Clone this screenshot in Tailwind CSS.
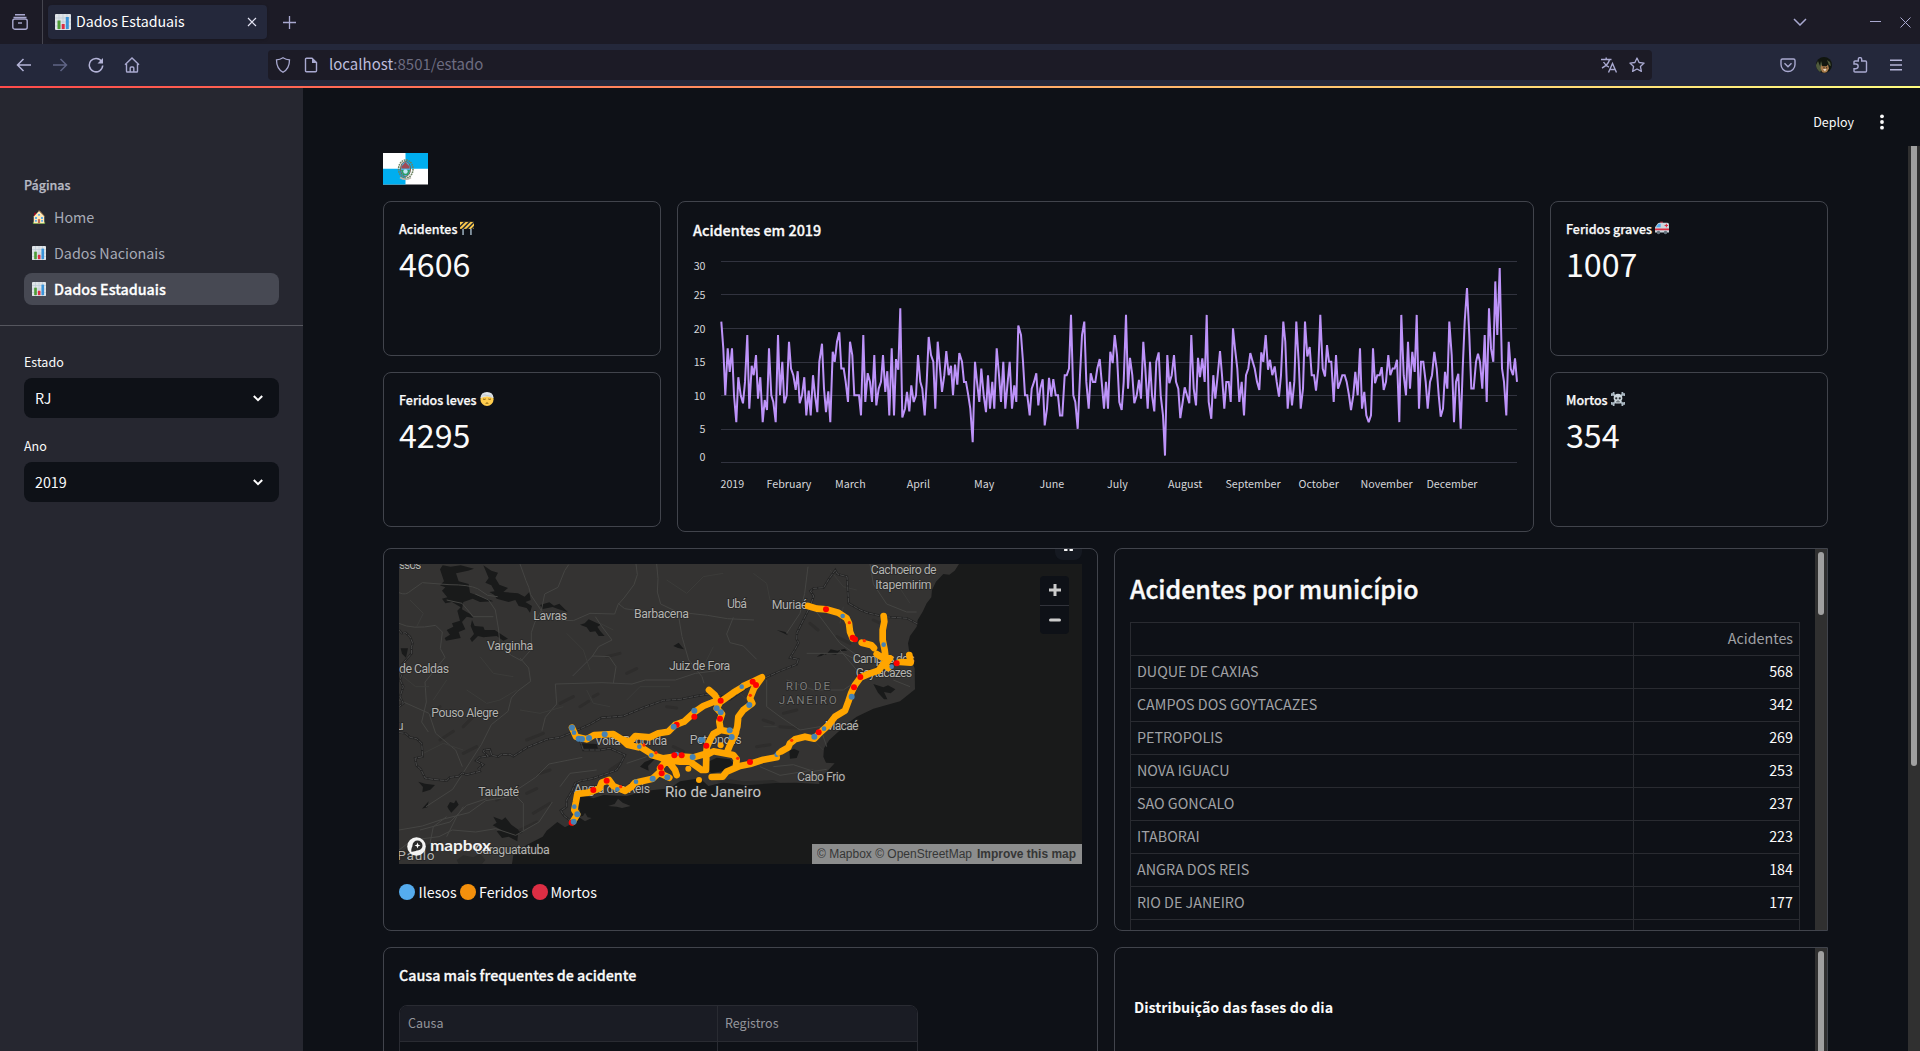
<!DOCTYPE html>
<html lang="pt-BR">
<head>
<meta charset="utf-8">
<title>Dados Estaduais</title>
<script src="https://cdn.jsdelivr.net/npm/@tailwindcss/browser@4"></script>
</head>
<body class="w-[1920px] h-[1051px] overflow-hidden flex flex-col bg-[#0e1117] text-[#fafafa] font-['Noto_Sans_CJK_JP','Noto_Sans',sans-serif] text-[14.3px] leading-6">
<svg class="hidden">
  <symbol id="bars" viewBox="0 0 16 16"><rect width="16" height="16" rx="1" fill="#dfe4e8"/><path d="M0 4h16M0 8h16M0 12h16M4 0v16M8 0v16M12 0v16" stroke="#bccad6" stroke-width=".7"/><path d="M2.5 6.5h3V15h-3z" fill="#4d9b35"/><path d="M6.7 10h3v5h-3z" fill="#dd2e44"/><path d="M10.8 3h3v12h-3z" fill="#3b94d9"/></symbol>
  <symbol id="house" viewBox="0 0 16 16"><path d="M1 13.5h14V16H1z" fill="#5c913b"/><path d="M2.5 3h2v4h-2z" fill="#a0041e"/><path d="M8 1 14 7.500v7.500H2V7.500z" fill="#ffe8b6"/><path d="M8 .5 14 7" stroke="#d9a86c" fill="none"/><path d="M3.500 8h2.200v2.200H3.500zM10.300 8h2.200v2.200h-2.200zM7 4.500h2v2H7zM3.500 11.500h2v2h-2zM10.500 11.500h2v2h-2z" fill="#55acee"/><path d="M6.800 10.500h2.400V15H6.800z" fill="#c1694f"/></symbol>
  <symbol id="barrier" viewBox="0 0 16 16"><path d="M2.500 8h2v8h-2zM11.500 8h2v8h-2z" fill="#8899a6"/><rect y="1" width="16" height="8" fill="#ffcc4d"/><path d="m0 5 4-4h2.500L0 7.500zM1.500 9l8-8H12L4 9zM7 9l8-8h1v1.500L9.500 9zM12.500 9 16 5.500V8l-1 1z" fill="#292f33"/></symbol>
  <symbol id="ambulance" viewBox="0 0 16 16"><path d="M6 2V.800h3V2z" fill="#dd2e44"/><path d="M0 7 3 3q1-1 2-1h9q2 0 2 2v9H0z" fill="#ccd6dd"/><path d="M1 7 4 3h2.500v4z" fill="#55acee"/><path d="M0 8.500h16v2H0zM11 4.500h4v1.200h-4zM12.400 3h1.200v4h-1.200z" fill="#dd2e44"/><circle cx="4" cy="13" r="2" fill="#66757f"/><circle cx="12" cy="13" r="2" fill="#66757f"/></symbol>
  <symbol id="bandage" viewBox="0 0 16 16"><circle cx="8" cy="8.500" r="7.500" fill="#ffcc4d"/><path d="M.500 7Q1 0 8 0t7.500 7Q8 3.500.500 7z" fill="#dfe4e8"/><path d="m1 4.500 13-1M3 2l11 4" stroke="#b4c0ca" stroke-width=".6"/><path d="M3.500 8q1.500.8 3 0M9.500 8q1.500.8 3 0M6.500 13q1.500-1 3 0" stroke="#664500" fill="none"/></symbol>
  <symbol id="skull" viewBox="0 0 16 16"><path d="m2 2 12 12M14 2 2 14" stroke="#aab8c2" stroke-width="2.200"/><path d="M0 1.500h2V0h2v3H2v1.500H0zM16 1.500h-2V0h-2v3h2v1.500h2zM0 14.500h2V16h2v-3H2v-1.500H0zM16 14.500h-2V16h-2v-3h2v-1.500h2z" fill="#aab8c2"/><path d="M8 2c3 0 5 2 5 5 0 2-1 2.500-1.500 3.500L11 13H5l-.5-2.500C4 9.500 3 9 3 7c0-3 2-5 5-5z" fill="#ccd6dd"/><circle cx="6" cy="7.200" r="1.300" fill="#292f33"/><circle cx="10" cy="7.200" r="1.300" fill="#292f33"/><path d="M6 11.200h4M8 9v1" stroke="#292f33" stroke-width=".9"/></symbol>
</svg>

<!-- tab strip -->
<header class="h-11 shrink-0 bg-[#1c1b26] flex items-center text-[#a9b1d6]">
  <div class="w-[43px] h-full border-r border-[#45454f] flex items-center pl-3">
    <svg class="size-4" viewBox="0 0 16 16" fill="none" stroke="#a9a9d0" stroke-width="1.400"><path d="M3 .700h10M1.500 3.400h13"/><rect x=".8" y="5" width="14.400" height="10.200" rx="2"/><path d="M6 9h4"/></svg>
  </div>
  <div class="ml-[5px] w-[219px] h-[34px] rounded bg-[#24283b] shadow flex items-center pl-[7px] pr-2.5 text-white">
    <svg class="size-4"><use href="#bars"/></svg>
    <span class="ml-[5px] flex-1 text-[14.2px] pb-0.5">Dados Estaduais</span>
    <svg class="size-[10px]" viewBox="0 0 10 10" stroke="#e4e4f4" stroke-width="1.200"><path d="m1 1 8 8M9 1 1 9"/></svg>
  </div>
  <svg class="ml-4 size-[13px]" viewBox="0 0 13 13" stroke="#a9a9d0" stroke-width="1.300"><path d="M6.500 0v13M0 6.500h13"/></svg>
  <div class="ml-auto flex items-center pr-[9px]">
    <svg class="w-3.5 h-2 mr-[63px]" viewBox="0 0 14 8" fill="none" stroke="#a9a9d0" stroke-width="1.500"><path d="m1 1 6 6 6-6"/></svg>
    <svg class="w-[11px] h-3 mr-[19px]" viewBox="0 0 11 12" stroke="#a9a9d0"><path d="M0 5.500h11"/></svg>
    <svg class="w-[11px] h-[11px]" viewBox="0 0 11 11" stroke="#a9a9d0"><path d="m.5.500 10 10m0-10-10 10"/></svg>
  </div>
</header>

<!-- toolbar -->
<div class="h-[42px] shrink-0 bg-[#24283b] flex items-center">
  <div class="w-[268px] flex items-center pl-4 gap-5">
    <svg class="size-4" viewBox="0 0 16 16" fill="none" stroke="#b4b4d8" stroke-width="1.500"><path d="M15 8H1.500M7.500 2 1.500 8l6 6"/></svg>
    <svg class="size-4" viewBox="0 0 16 16" fill="none" stroke="#5f6485" stroke-width="1.500"><path d="M1 8h13.500M8.500 2l6 6-6 6"/></svg>
    <svg class="size-4" viewBox="0 0 16 16" fill="none" stroke="#b4b4d8" stroke-width="1.500"><path d="M13.700 4.600A6.700 6.700 0 1 0 14.700 8.500"/><path d="M15 1v5.500H9.500z" fill="#b4b4d8" stroke="none"/></svg>
    <svg class="size-4" viewBox="0 0 16 16" fill="none" stroke="#a9a9d0" stroke-width="1.400"><path d="M1 7.800 8 1l7 6.800M2.500 7v7.200q0 .8.800.8h9.400q.8 0 .8-.8V7M6.200 15v-4q0-1 1-1h1.600q1 0 1 1v4"/></svg>
  </div>
  <div class="w-[1384px] h-[30px] rounded bg-[#1c1b26] flex items-center pl-[7px] pr-[7px]">
    <svg class="size-4" viewBox="0 0 16 16" fill="none" stroke="#a9a9d0" stroke-width="1.300"><path d="M8 .700q3 1.800 6.500 2.200 0 8.500-6.500 12.400Q1.500 11.400 1.500 2.900 5 2.500 8 .700z"/></svg>
    <svg class="ml-3 size-4" viewBox="0 0 16 16" fill="none" stroke="#a9a9d0" stroke-width="1.400"><path d="M3.500 1.200H9L13.500 5.500v8.300q0 1-1 1h-9q-1 0-1-1V2.200q0-1 1-1z"/><path d="M9 1v5h5z" fill="#a9a9d0" stroke="none"/></svg>
    <span class="ml-[10px] flex-1 pb-0.5 text-[15px] text-[#6c6c80]"><span class="text-[#bcbcdc]">localhost</span>:8501/estado</span>
    <svg class="size-4" viewBox="0 0 16 16" fill="none" stroke="#a9a9d0" stroke-width="1.400"><path d="M0 2.500h10.500M5.200.5v2M8.500 2.800Q7 8 1 11M2.500 5Q5 9 8 10.200M7.500 15.500 11.500 6.500l4 9M9 12.500h5"/></svg>
    <svg class="ml-3 size-4" viewBox="0 0 16 16" fill="none" stroke="#a9a9d0" stroke-width="1.300" stroke-linejoin="round"><path d="m8 1 2.100 4.500 5 .6-3.700 3.400 1 4.900L8 12l-4.400 2.400 1-4.900L.900 6.100l5-.6z"/></svg>
  </div>
  <div class="ml-auto flex items-center gap-5 pr-4">
    <svg class="size-4" viewBox="0 0 16 16" fill="none" stroke="#a9a9d0" stroke-width="1.400"><path d="M2.500 2h11q1.500 0 1.500 1.500V7.500a7 7 0 0 1-14 0v-4Q1 2 2.500 2zM4.500 6.200 8 9.700l3.500-3.500"/></svg>
    <svg class="size-4" viewBox="0 0 16 16"><circle cx="8" cy="8" r="8" fill="#11160f"/><path d="M0 8 2 4l2 5 1-5 1 3v6l-2 2q-4-3-4-7zM11 3l3 2 1 4-2-1z" fill="#4f5a3c"/><path d="m5.500 8 1 1.200h4L12 7.500l1 4-2 3.500q-3 1.500-5 0l-1.500-4z" fill="#a87a4b"/><path d="M7 12h3.500L9 14.500z" fill="#e9dccb"/><path d="M7.500 10.800h1M10.200 10.800h1" stroke="#111"/></svg>
    <svg class="size-4" viewBox="0 0 16 16" fill="none" stroke="#a9a9d0" stroke-width="1.400"><path d="M2 7V5q0-1 1-1h3.300V2.300a1.700 1.700 0 0 1 3.400 0V4H13.500q1 0 1 1v9q0 1-1 1H3q-1 0-1-1v-2.300h1.800a2.300 2.300 0 0 0 0-4.700z"/></svg>
    <svg class="size-4" viewBox="0 0 16 16" stroke="#b4b4d8" stroke-width="1.400"><path d="M2 3.200h12M2 8h12M2 12.800h12"/></svg>
  </div>
</div>
<div class="h-0.5 shrink-0 bg-linear-to-r/srgb from-[#ff4b4b] to-[#fffd80]"></div>

<div class="flex-1 flex min-h-0">
  <aside class="w-[303px] shrink-0 bg-[#262730] flex flex-col text-[#fafafa]">
    <div class="mt-[87px] ml-6 h-5 leading-5 text-[12.5px] font-medium [-webkit-text-stroke:0.25px] text-[#b8bac4]">Páginas</div>
    <nav class="mt-[6px] ml-6 w-[255px] flex flex-col gap-1 text-[#a8abb7]">
      <a class="h-8 px-2 flex items-center gap-2"><svg class="size-3.5"><use href="#house"/></svg>Home</a>
      <a class="h-8 px-2 flex items-center gap-2"><svg class="size-3.5"><use href="#bars"/></svg>Dados Nacionais</a>
      <a class="h-8 px-2 flex items-center gap-2 rounded-lg bg-[#474953] text-white font-medium [-webkit-text-stroke:0.3px]"><svg class="size-3.5"><use href="#bars"/></svg>Dados Estaduais</a>
    </nav>
    <div class="mt-5 h-px bg-[#55565e]"></div>
    <div class="px-6 pt-[26px] flex flex-col">
      <div class="h-5 leading-5 text-[12.5px]">Estado</div>
      <div class="mt-[6px] h-10 rounded-lg bg-[#0e1117] flex items-center justify-between pl-[11px] pr-4"><span>RJ</span><svg class="w-[10px] h-[7px]" viewBox="0 0 10 7" fill="none" stroke="#fff" stroke-width="2"><path d="m.8 1 4.200 4.200L9.200 1"/></svg></div>
      <div class="mt-[18px] h-5 leading-5 text-[12.5px]">Ano</div>
      <div class="mt-[6px] h-10 rounded-lg bg-[#0e1117] flex items-center justify-between pl-[11px] pr-4"><span>2019</span><svg class="w-[10px] h-[7px]" viewBox="0 0 10 7" fill="none" stroke="#fff" stroke-width="2"><path d="m.8 1 4.200 4.200L9.200 1"/></svg></div>
    </div>
  </aside>

  <div class="flex-1 flex flex-col min-w-0">
    <div class="h-[58px] shrink-0 flex items-center justify-end pt-[10px] pr-9">
      <span class="text-[12.5px]">Deploy</span>
      <svg class="ml-[26px] w-1 h-4" viewBox="0 0 4 16" fill="#fafafa"><circle cx="2" cy="2.300" r="1.900"/><circle cx="2" cy="8" r="1.900"/><circle cx="2" cy="13.700" r="1.900"/></svg>
    </div>
    <div class="flex-1 flex min-h-0">
      <main class="flex-1 min-w-0 pl-20 pt-[7px] overflow-hidden">
        <svg class="w-[45px] h-[31.500px] block" viewBox="0 0 45 31.500"><path fill="#fff" d="M0 0h45v31.500H0z"/><path d="M22.500 0H45v15.700H22.500zM0 15.700h22.500v15.800H0z" fill="#00aeef"/><ellipse cx="22.800" cy="16" rx="7.200" ry="9" fill="none" stroke="#6b8260" stroke-width="1.600" stroke-dasharray="1.700 .7"/><ellipse cx="22.500" cy="16" rx="5" ry="7.500" fill="#4ab3df" stroke="#7c6148"/><path d="M18.500 13.500 22.500 9l4 4.500v2h-8z" fill="#a04b55"/><path d="M18 17h9l-2 5h-5z" fill="#2c9c66"/><circle cx="22.500" cy="18.500" r="2.200" fill="#bfe6f5"/><path d="M17 24.500q5.500 3.500 11 0" stroke="#b9b6ad" stroke-width="1.600" fill="none"/></svg>
        <section class="mt-[16.500px] w-[1445px] grid grid-cols-[278px_857px_278px] gap-4">
          <div class="flex flex-col gap-4">
            <div class="h-[155px] rounded-lg border border-[#41444c] px-[15px] pt-4"><div class="flex items-center gap-[3px] h-[22px] text-[12.500px] font-medium [-webkit-text-stroke:0.25px]">Acidentes<svg class="size-3.5 -mt-0.5"><use href="#barrier"/></svg></div><div class="text-[32.200px] leading-[46px]">4606</div></div>
            <div class="h-[155px] rounded-lg border border-[#41444c] px-[15px] pt-4"><div class="flex items-center gap-[3px] h-[22px] text-[12.500px] font-medium [-webkit-text-stroke:0.25px]">Feridos leves<svg class="size-3.5 -mt-0.5"><use href="#bandage"/></svg></div><div class="text-[32.200px] leading-[46px]">4295</div></div>
          </div>
          <div class="h-[331px] rounded-lg border border-[#41444c] px-[15px] pt-[15.500px]">
            <div class="h-6 text-[14.400px] font-medium [-webkit-text-stroke:0.3px]">Acidentes em 2019</div>
            <svg class="block mt-[8.500px] w-[826px] h-[250px] text-[10.700px] fill-[#d5d6da]" viewBox="693 250 826 250">
              <path d="M721 261.500h796M721 294.500h796M721 328.500h796M721 362.500h796M721 395.500h796M721 429.500h796M721 462.500h796" stroke="#31333f"/>
              <g text-anchor="end"><text x="705.500" y="270">30</text><text x="705.500" y="299">25</text><text x="705.500" y="333">20</text><text x="705.500" y="366">15</text><text x="705.500" y="399.500">10</text><text x="705.500" y="433">5</text><text x="705.500" y="461">0</text></g>
              <g><text x="720.500" y="488">2019</text><text x="766.500" y="488">February</text><text x="835" y="488">March</text><text x="906.700" y="488">April</text><text x="974" y="488">May</text><text x="1039.500" y="488">June</text><text x="1107" y="488">July</text><text x="1168" y="488">August</text><text x="1225.500" y="488">September</text><text x="1298.500" y="488">October</text><text x="1360.500" y="488">November</text><text x="1426.500" y="488">December</text></g>
              <polyline id="series" fill="none" stroke="#bd93f9" stroke-width="2" stroke-linejoin="miter" stroke-miterlimit="2"/>
            </svg>
          </div>
          <div class="flex flex-col gap-4">
            <div class="h-[155px] rounded-lg border border-[#41444c] px-[15px] pt-4"><div class="flex items-center gap-[3px] h-[22px] text-[12.500px] font-medium [-webkit-text-stroke:0.25px]">Feridos graves<svg class="size-3.5 -mt-0.5"><use href="#ambulance"/></svg></div><div class="text-[32.200px] leading-[46px]">1007</div></div>
            <div class="h-[155px] rounded-lg border border-[#41444c] px-[15px] pt-4"><div class="flex items-center gap-[3px] h-[22px] text-[12.500px] font-medium [-webkit-text-stroke:0.25px]">Mortos<svg class="size-3.5 -mt-0.5"><use href="#skull"/></svg></div><div class="text-[32.200px] leading-[46px]">354</div></div>
          </div>
        </section>

        <section class="mt-4 w-[1445px] grid grid-cols-[715px_714px] grid-rows-[383px_383px] gap-4">
          <div class="relative overflow-hidden rounded-lg border border-[#41444c] pl-[15px] pt-[15px]">
            <div class="absolute right-[15px] -top-4 w-[27px] h-[27px] rounded-lg bg-[#151921] flex items-end justify-center pb-[9px]"><svg class="w-[9px] h-[9px]" viewBox="0 0 9 9" fill="none" stroke="#fafafa" stroke-width="1.800"><path d="M1 5.500V8h2.500M5.500 8H8V5.500"/></svg></div>
            <div class="relative w-[683px] h-[300px]">
              <svg id="map" class="block w-[683px] h-[300px] font-[Roboto,sans-serif]" viewBox="57 72 2049 900">
                <path fill="#191a1a" d="M57 72h2049v900H57z"/>
                <path fill="#343332" d="M57 72H1737L1724 92 1708 104 1690 102 1668 125 1656 150 1654 172 1640 190 1628 215 1613 240 1610 260 1590 288 1584 310 1590 350 1604 385 1605 448 1560 484 1480 506 1430 530 1400 552 1370 580 1348 600 1332 625 1330 650 1338 668 1364 670 1345 690 1318 718 1318 732 1250 728 1080 730 1050 722 985 738 960 715 900 724 870 745 800 752 740 768 670 765 640 775 598 762 590 790 600 810 586 845 555 862 532 846 500 872 488 890 440 915 400 945 396 972H57z"/>
                <g fill="#191a1a"><path d="M985 665l25-12 40 5 10 12-25 22-40 8-20-14zM1228 632l14-6 16 8-8 20-20 2zM1480 432l30 10 14-6 22 12-14 12-20-4 10 22-10 0-18-20z"/>
                <path d="M180 88l8-12 24 4 30-4 40 10-18 6-36 8 8 24 30 8 4 26 50 18 20 8-40 2-22-10-28 10-4 22 24 14 10 12-20-4-14 16 10 22-20 8 6 18-44 8-4-8 16-10-10-14 20-10-4-10 24-8-8-30 10-10-26-16-20 4-10-14 16-4-16-20 10-10-16-6 12-12zM310 76l24 16 20 6-8 16 12 20 26 10-14 12 44 4 20 10 14-14 4 24-16 6 20 12-6 20-10-14-24-6-10-18-20 6-36-10-8-12-14-8 16-2-10-18-18-8 10-14zM276 240l8 18 26 2 4 10 30 0 40 26-14 6-20-14-40 4-16-4-18 18-6-10 12-14-10-24zM480 195l28-8 14 10 16-6 26 26-30-10-16-6-30 6zM600 254l14-4 12-12 36 16-10 6 8 12 14 16-18 0-10-14-16 2-10-14zM880 318l16-10 16 20-18-4zM62 325l22 0-6 28-12-12zM115 725l20 6 30 4-14 14-24 8 2-16zM202 800l8-14 12 4 6-10 8 14-22 24-8-10zM126 806l20-22-4 18zM340 830l26 10 10-8 18 22 34 24-14 4-2 22-26-14-20 4-16-20 14-4-26-14 12-8zM600 610l50 2 4 14-46 0zM780 680l14-14 36-14-26 26 2 14zM1190 270l26 6 8 10zM1310 350l16-10 12 4 14-16 20 4 22-6 8 6-24 2-10 10-30-4-14 8z"/></g>
                <path fill="#343332" d="M684 798l20-6 10-16 14 12 24 10-26 6-16-4zM595 830l14-2 6-10 8 14 12 2-20 10z"/>
                <g fill="#2b2b2a"><path d="M230 960l20-14 30 6 20-12 16 20-10 12h-70zM60 940l40-30 20 12 60-20 10 22-50 26-80 10zM1010 726l40-8 40 6 90-4 20 8-100 8z"/></g>
                <g fill="none" stroke="#2e2d2c" stroke-width="9" stroke-linecap="round"><path d="M150 520l30-20M180 600l40-26M250 560l30-30M440 600l50-20M540 490l40-20M600 500l26-16M640 470l14-8M350 780l50-26M440 760l30-14M250 640l40-20M480 700l30-10M680 350l40-10M740 400l30-14M860 500l30 4M1150 540l30 10M1210 520l40-10M1200 560l50 4M1130 620l40-6M1480 240l30 14M1370 290l40 20M1290 250l24 20M880 620l30 14M690 690l30-20M460 820l50-30M420 870l50-24"/></g>
                <g fill="none" stroke="#454543" stroke-width="3"><path d="M57 158q20 10 36-6l34-24 80 6q60 0 86 12l30 20 30 4M420 72l18 50q10 20 14 42l32 48 26 26 70 4 50-22 74 2 10-28 18-20 30-40 10-30-4-32M830 72l4 44-2 40 10 36 50 24 90 10 60 10 80 4M484 212l10-50 40-20 20-50 12-18M714 190l20 16 40 6 50 14M484 212l-20 36-10 30 0 50-30 34-30-16-34-26-4-50-10-60-20-30-40-18M57 250q40 20 110 6l20 20-6 50 14 26-60 74 4 60-14 60 20 30M420 354l26 30 6 40-40 30-18 20-10 40-50 40-30 60-26 40-60 94-80 52M526 432l4 60-34 40-10 40M526 432l140-4 90 4 40-12 90 0 60-20 80-10M636 350l20-30 40-20-30-40-20-30M700 430l8-50-20-30-50-2-60 60M896 230l10 60 20 70 40 50 6 20M340 230l-60 0-34-40-46-10M57 870l70-12 60-20 80-20 50-36 60-10 90-60 40-40 100-20M120 870l90-24 50-50 60-20M200 890l30-60 20-30M57 930l40-30 80-10 40-20 70 6 60-10 60 20 70-40 40-60M150 910l10-50 40-30M430 870l0-80-20-20M1060 232l-20 50 10 26 40 10 40 40M1220 280l40-60 14-60 10-80M1290 190l60 80 30 40 70 50M1470 72l10 60 40 60 60 24 30 0M1220 420l80 30 90 0 60-40M1320 560l20 60M1320 560l-60 10-60-40-40-30 0-80M1180 680l60-6 60 20 40-6M1380 330l50 60M1280 340l110 0 60 30M540 740l30-40 80-10M740 670l60-20M1140 680l60 26 100-16M1540 420l50 20M57 480l90 40 20 60 60 50 20 50"/></g>
                <g fill="none" stroke="#3c3c3a" stroke-width="3"><path d="M90 180l40 40-20 40M300 350l40 50 60 10M260 450l60 40 40-10 50-30M620 450l20 40 50 10M740 480l40-40 90 0M130 640l60-30 60 20M57 400l50 40 40 0M860 120l60 40 50-50 60-10M1120 100l40 30 10 50 80 20M1350 90l40 50 40 10M560 280l50 50 20 60M200 420l-40 60M1150 560l40 0M1060 440l60 60M1200 500l40-20M1390 200l-10 50M1550 130l40 60M1300 600l30 30M420 510l60 10 70-20M660 250l40 20M1000 320l-30 60"/></g>
                <path id="bl" fill="none" d="M57 270l8 10 12-2 13 12 8 20-4 12 1 18-12 14-18 21 4 18-9 27 10 20-10 30 10 20-13 10M57 578l20 2 13 12 20 4 15 14 3 40-23 5 5 22 12 10 13 27 24 4 41 4 10-10 25-3 12-10 13 5 40-10-4-8 14-12-14-8-8-4 10-10 27-4-15-13 2-5 18-2 5 18 20 4 8-6 27-1 10 6 40-26 60-25 40-6 35-14 55-25 35-20 30-2 35-3 60-25 60-22 50-3 50-10 50-8 50 18 50-35 46-25 54-25 50-20 5-15-25-5 16-26 10-19-6-10 1-20 25-50 15-30 10-30-10-15 10-8 30-2 15-25 20-28 6 12 29 8 5 80 35 20 20 8 50 12 70 5 32 17M600 600l10 30 50 0 30-5 45 20-15 30-10 15-70 25-40 8-15 7-10 25-15 25 0 20-18 12 10 15 23 18"/>
                <use href="#bl" stroke="#232323" stroke-width="7"/><use href="#bl" stroke="#5c5c5c" stroke-width="2" stroke-dasharray="14 3"/>
                <g fill="#b3b3b0" stroke="#252525" stroke-width="4" paint-order="stroke" font-size="37">
                  <text x="57" y="87" textLength="67">ssos</text><text x="460" y="240" textLength="101">Lavras</text><text x="762" y="234" textLength="165">Barbacena</text><text x="1041" y="203" textLength="60">Ubá</text><text x="1175" y="206" textLength="108">Muriaé</text><text x="321" y="331" textLength="139">Varginha</text><text x="57" y="400" textLength="150">de Caldas</text><text x="867" y="391" textLength="184">Juiz de Fora</text><text x="154" y="531" textLength="202">Pouso Alegre</text><text x="50" y="570">u</text><text x="295" y="767" textLength="122">Taubaté</text><text x="645" y="614" textLength="217">Volta Redonda</text><text x="929" y="611" textLength="156">Petrópolis</text><text x="582" y="759" textLength="228">Angra dos Reis</text><text x="285" y="942" textLength="224">Caraguatatuba</text><text x="1472" y="102" textLength="198">Cachoeiro de</text><text x="1486" y="146" textLength="169">Itapemirim</text><text x="1418" y="369" textLength="186">Campos dos</text><text x="1427" y="411" textLength="169">Goytacazes</text><text x="1334" y="571" textLength="102">Macaé</text><text x="1251" y="722" textLength="145">Cabo Frio</text>
                  <text x="855" y="770" textLength="288" font-size="45" fill="#c6c6c4">Rio de Janeiro</text><text x="52" y="960" textLength="112" font-size="41">Paulo</text>
                  <g fill="#7c7c7a" font-size="35"><text x="1217" y="450" textLength="133">RIO DE</text><text x="1196" y="493" textLength="174">JANEIRO</text></g>
                </g>
                <g fill="none" stroke="#ffa500" stroke-width="20" stroke-linecap="round" stroke-linejoin="round">
                  <path d="M576 563L588 590 620 598 642 585 700 582 725 598 742 614 775 622M780 620L820 645 860 660 900 665 930 665 965 690 978 690 979 645 1000 634 1060 645 1070 658 1068 680M725 598L750 605 766 588 810 592 835 580 865 575 885 555 912 545 945 515 970 498 1000 486 1022 485 1060 458 1085 443M1090 438L1118 425 1146 412 1122 445 1110 475 1117 490 1090 510 1075 530 1072 560 1065 585 1050 615 1040 640M987 450L1005 466 1018 490 1010 505 1026 522 1018 545 1022 570 1000 582 990 600 981 620 978 645M1022 570L1068 578M815 645L850 655 880 650 905 650 940 652 975 642M860 660L840 685 846 703 868 713M868 668L885 690 890 705M578 846L592 823 583 810 588 785 592 762 625 758 658 746 665 728 687 720 700 738 735 753 755 740 765 728 818 716 835 700"/>
                  <path d="M995 711L1028 710 1040 695 1080 678 1110 672 1150 659 1190 652M1204 634L1225 622 1230 610 1245 598 1275 590 1303 596 1320 578 1345 556 1365 530 1395 512 1405 485 1414 458 1425 435 1442 412 1470 400 1495 392 1510 372M1511 228L1513 245 1508 270 1508 300 1514 330 1517 355M1284 198L1310 206 1338 208 1375 218 1400 235 1407 250 1410 275 1418 295M1445 308L1475 316 1482 324M1490 342L1505 352 1530 355 1514 375 1525 384M1560 366L1592 368 1588 345"/>
                </g>
                <g fill="#ffa500"><circle cx="925" cy="686" r="9"/><circle cx="957" cy="720" r="9"/><circle cx="1022" cy="616" r="9"/></g>
                <g id="dots"></g>
              </svg>
              <div class="absolute left-2 top-[271px] flex items-center gap-[4px] text-white">
                <svg class="size-[19px]" viewBox="0 0 19 19"><circle cx="9.500" cy="9.500" r="9.300" fill="#f4f4f4"/><circle cx="10.500" cy="8.500" r="5" fill="#2b2b2b"/><path d="M4.300 14.700q-.3-4.700 2.700-7.200l4.500 4.500q-2.500 3-7.200 2.700z" fill="#2b2b2b"/><path d="m10.500 5.500.8 2.200 2.200.8-2.200.8-.8 2.200-.8-2.200-2.200-.8 2.200-.8z" fill="#fff"/></svg>
                <svg class="w-[62px] h-[22px] font-[Lato,sans-serif] font-bold fill-[#f4f4f4]" viewBox="0 0 62 22"><text x="0" y="15.500" font-size="16" textLength="61" lengthAdjust="spacingAndGlyphs">mapbox</text></svg>
              </div>
              <div class="absolute right-[13px] top-3 w-[29px] h-[58px] rounded bg-[#0e1117] flex flex-col items-center">
                <div class="h-[30px] w-full flex items-center justify-center border-b border-[#31333b]"><svg class="size-3" viewBox="0 0 12 12" stroke="#ccc" stroke-width="3"><path d="M6 0v12M0 6h12"/></svg></div>
                <div class="h-[29px] flex items-center"><svg class="size-3" viewBox="0 0 12 12" stroke="#ccc" stroke-width="3" stroke-linecap="round"><path d="M1.500 6h9"/></svg></div>
              </div>
              <div class="absolute right-0 bottom-0 w-[270px] h-5 bg-[#8c8d8d] font-['Liberation_Sans',sans-serif] text-[12px] pl-[5px]">
                <svg class="w-[262px] h-5 fill-[#353636]" viewBox="0 0 262 20"><text x="0" y="14" textLength="155" lengthAdjust="spacingAndGlyphs">© Mapbox © OpenStreetMap</text><text x="160" y="14" class="font-bold" textLength="99" lengthAdjust="spacingAndGlyphs">Improve this map</text></svg>
              </div>
            </div>
            <div class="mt-4 h-6 flex items-center"><span class="size-4 rounded-full bg-[#55acee] mr-[3.500px]"></span><span class="w-[41.500px]">Ilesos</span><span class="size-4 rounded-full bg-[#f4900c] mr-[3px]"></span><span class="w-[52.500px]">Feridos</span><span class="size-4 rounded-full bg-[#dd2e44] mr-[3px]"></span>Mortos</div>
          </div>

          <div class="overflow-hidden rounded-l-lg border border-[#41444c] flex">
            <div class="flex-1 pl-[15px] pt-[22px]">
              <h2 class="h-[35px] leading-[34px] text-[24.900px] font-medium [-webkit-text-stroke:0.400px] whitespace-nowrap">Acidentes por município</h2>
              <table class="mt-4 w-[670px] table-fixed border-collapse leading-6 text-[#a0a1a5] [&_td]:border [&_td]:border-[#292b31] [&_td]:h-[33px] [&_td]:p-0 [&_td]:px-[6px] [&_td]:pb-0.5">
                <tbody id="cities"><tr><td class="w-[503px]"></td><td class="text-right">Acidentes</td></tr></tbody>
              </table>
            </div>
            <div class="w-3 bg-[#303030] flex justify-center pt-[3px]"><div class="w-1.5 h-[63px] rounded-full bg-[#a0a0a0]"></div></div>
          </div>

          <div class="overflow-hidden rounded-lg border border-[#41444c] pl-[15px] pt-[15px]">
            <div class="h-6 font-medium [-webkit-text-stroke:0.3px]">Causa mais frequentes de acidente</div>
            <div class="mt-[18px] w-[519px] h-80 rounded-lg border border-[#292b32] overflow-hidden text-[12.500px] text-[#94959b]">
              <div class="h-[36px] bg-[#1a1c24] border-b border-[#292b32] flex items-center"><div class="w-[318px] h-full border-r border-[#292b32] pl-2 leading-[33px]">Causa</div><div class="pl-[7px] pb-0.5">Registros</div></div>
              <div class="h-9 flex"><div class="w-[318px] border-r border-[#292b32]"></div></div>
            </div>
          </div>
          <div class="overflow-hidden rounded-l-lg border border-[#41444c] flex">
            <div class="flex-1 pl-[19px] pt-[47px] font-bold text-[14.300px]">Distribuição das fases do dia</div>
            <div class="w-3 bg-[#303030] flex justify-center pt-[3px]"><div class="w-1.5 h-[200px] rounded-full bg-[#a0a0a0]"></div></div>
          </div>
        </section>
      </main>
      <div class="w-3 bg-[#303030] pl-[3px]"><div class="w-1.5 h-[620px] rounded-b-full bg-[#a0a0a0]"></div></div>
    </div>
  </div>
</div>

<script>
// daily accidents: "x:value", x counted in thirds of a pixel
const daily = `154:21 160:17 166:10 173:17 179:13.5 186:17 192:10 199:6 205:12.7 212:10 219:8.8 225:12 232:19 238:8 245:14.4 251:13 258:16 264:9.5 271:12.7 278:6 284:9.3 291:7.8 297:17 304:10 310:9 317:6 324:19 330:10 337:15 343:8.8 350:10 357:18 363:14 370:13 377:10.8 383:13.6 389:8.8 396:10 403:12.7 409:7 416:10.7 422:7 429:13 435:10 442:7.5 448:15 456:17.7 462:11 468:7.5 475:10.6 481:6 488:16.5 494:15 501:18 508:19.4 514:14 521:14 527:12 534:9 540:18 547:16 553:10 560:10 567:10 573:7 580:19 586:9 593:13.3 600:12 606:9 613:16 619:8.5 626:11 633:12 639:16 646:10.5 652:13.6 658:7 665:17 672:7 678:15.4 685:13.8 691:23 697:6.7 705:8 711:10.5 718:7.6 724:11.5 731:9 738:10 744:16 751:12 757:11 764:7 770:12 776:18.7 783:16 790:15 796:8 803:18 810:14 816:10.5 823:13 829:16.6 836:13 843:14.4 849:10 855:14.6 862:11.6 868:16.3 876:15 882:12 888:12 895:10 901:8 908:3 915:15 921:12 928:9 934:14 941:10 948:7.5 954:13 960:8 967:12 973:8 980:17 987:13 993:9 1000:15 1006:8 1013:12 1019:15 1026:8 1033:11.5 1039:9 1045:20.4 1053:19 1059:15 1065:10 1072:10 1079:7 1085:11 1092:12 1099:13.3 1105:8.5 1111:11 1118:12.4 1124:5.5 1131:8 1137:12.6 1144:9.8 1150:12.4 1157:10 1164:10 1170:7 1177:7 1184:13 1190:13 1197:14 1203:22 1210:10 1216:9 1223:5 1230:13 1236:19 1243:21 1249:12 1256:8`;
const daily2 = `2:13.3 9:12 16:12 22:14 29:15.4 35:12 42:8 48:12 54:8 61:16.5 68:14.8 74:19 81:16 88:9 95:7.8 101:12 108:22 114:11 120:15.6 127:13 133:8.8 140:10 147:12.3 153:9.5 160:18 166:14 173:8 180:15 186:10 193:7.6 199:15 206:16.4 212:10 219:7 225:1 232:16 238:11.8 245:13 252:16 258:12 265:11 271:6.6 278:9 284:11.2 291:10 298:8.8 304:19 311:11 318:8.5 324:15.6 330:12.7 337:15.5 344:12 350:22 356:9 364:6.5 370:13 376:9.5 383:13 390:16.6 396:13 403:8 409:12 416:12 422:9 429:20 435:17 442:14 448:9 455:12 462:7 468:13 475:14 481:16.3 488:15 494:14 501:12 508:10.8 514:16.4 520:15 527:19 534:13.8 540:15.3 547:13 554:14.3 560:12 567:9.8 573:13 580:21 586:18 593:8 600:12 606:8.5 613:12 619:21 626:15 632:8 639:11 645:21 652:15.8 659:17.2 665:13 672:13 678:10.7 685:14 691:22 698:14 705:12.8 711:17.5 717:15 724:15 731:9 738:16 744:11 751:12 757:13 764:13 770:12 777:10 783:7.8 790:10 796:13.5 803:10 810:17 816:8 823:10.5 829:7 836:6 843:7 849:17 855:11.8 862:13 869:13 875:14.2 881:10.8 888:12 895:16 901:13 908:14 914:14 921:15.3 928:6 934:22 941:13 948:10 954:18 960:11 967:16.5 974:13.5 980:22 987:8 993:15 1000:15 1007:12 1013:8 1020:12 1026:13 1033:16.5 1040:14 1046:10 1052:6.8 1059:8 1065:13.5 1072:11 1078:21 1085:16 1092:6 1098:12 1105:13.2 1112:5 1118:14 1124:21 1131:26 1138:19 1144:11 1151:11 1158:15 1164:16.2 1170:15 1177:11 1184:19 1190:9 1197:23 1203:17 1210:15 1216:27 1222:19 1229:29 1236:14 1242:12 1249:7 1256:18 1262:14 1269:13 1275:15.5 1281:12`;
const plot = (text, left) => text.split(' ').map(p => {
  const [x, v] = p.split(':').map(Number);
  return (left + x / 3).toFixed(1) + ',' + (462.3 - v * 6.7).toFixed(1);
}).join(' ');
document.getElementById('series').setAttribute('points', plot(daily, 670) + ' ' + plot(daily2, 1090));

const dot = (color, r) => ([x, y]) => `<circle cx="${x}" cy="${y}" r="${r}" fill="${color}"/>`;
const red = [[680,722],[640,750],[845,700],[842,682],[883,646],[905,646],[979,617],[1020,536],[1022,482],[890,554],[943,530],[1118,425],[1128,435],[1338,208],[1418,293],[1425,298],[1550,370],[1441,411],[1422,442],[1316,577],[1110,666],[575,848]];
const blue = [[576,563],[596,596],[606,597],[627,594],[674,583],[943,512],[881,560],[1010,505],[1022,517],[1049,571],[1055,591],[965,600],[938,651],[862,712],[818,716],[592,823],[581,845],[1108,495],[1303,590],[1415,470]];
const blueSmall = [[582,578],[768,725],[712,748],[814,646],[778,620],[890,642],[1190,644],[1332,566],[1388,228],[1511,314],[1535,380],[1085,440],[583,800]];
const redSmall = [[828,638],[792,615],[1073,655],[1235,601],[1453,302],[1408,248],[1111,466],[722,740]];
document.getElementById('dots').innerHTML = redSmall.map(dot('#ff2a00', 5)).join('') + blueSmall.map(dot('#4682b4', 7)).join('') + red.map(dot('#ff0000', 9)).join('') + blue.map(dot('#4682b4', 9)).join('') + dot('#ffa500', 8)([1196,639]);

const cities = [['DUQUE DE CAXIAS',568],['CAMPOS DOS GOYTACAZES',342],['PETROPOLIS',269],['NOVA IGUACU',253],['SAO GONCALO',237],['ITABORAI',223],['ANGRA DOS REIS',184],['RIO DE JANEIRO',177],['','']];
document.getElementById('cities').insertAdjacentHTML('beforeend', cities.map(([n, v]) => `<tr><td>${n}</td><td class="text-right text-[#fafafa]">${v}</td></tr>`).join(''));
</script>
</body>
</html>
